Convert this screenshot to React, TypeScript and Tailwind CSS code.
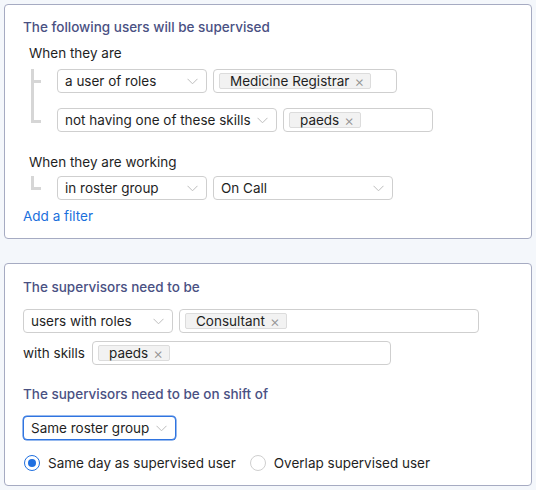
import React from "react";

const font = { fontFamily: "Inter, 'Noto Sans', sans-serif" };

function Chevron() {
  return (
    <svg width="11" height="7" viewBox="0 0 11 7" className="shrink-0">
      <path d="M0.5 0.8 L5.5 5.8 L10.5 0.8" fill="none" stroke="#bdbdbd" strokeWidth="1" />
    </svg>
  );
}

function Select({ label, width, focused }: { label: string; width: string; focused?: boolean }) {
  return (
    <div
      className={`${width} h-6 shrink-0 flex items-center justify-between pl-[7px] pr-[8px] rounded-[4px] bg-white border ${
        focused ? "border-[#2f74e0] shadow-[0_0_0_0.5px_#2f74e0]" : "border-[#cfcfcf]"
      }`}
    >
      <span className="text-[13.5px] text-[#1f1f1f] whitespace-nowrap">{label}</span>
      <Chevron />
    </div>
  );
}

function Tag({ label }: { label: string }) {
  return (
    <span className="h-4 flex items-center gap-[5px] pl-[10px] pr-[6px] bg-[#f2f2f2] border border-[#dcdcdc] rounded-[2px] text-[13.5px] text-[#1f1f1f] whitespace-nowrap">
      {label}
      <span className="text-[15px] font-light text-[#8f8f8f] leading-none">×</span>
    </span>
  );
}

function TagInput({ tag, width }: { tag: string; width: string }) {
  return (
    <div className={`${width} h-6 shrink-0 flex items-center px-[5px] rounded-[4px] bg-white border border-[#cfcfcf]`}>
      <Tag label={tag} />
    </div>
  );
}

function Radio({ checked, label }: { checked?: boolean; label: string }) {
  return (
    <div className="flex items-center gap-2">
      {checked ? (
        <span className="w-4 h-4 rounded-full border-[1.5px] border-[#1f6fe0] flex items-center justify-center">
          <span className="w-2 h-2 rounded-full bg-[#1f6fe0]" />
        </span>
      ) : (
        <span className="w-4 h-4 rounded-full border border-[#cfcfcf] bg-white" />
      )}
      <span className="text-[13.5px] text-[#1f1f1f] leading-5">{label}</span>
    </div>
  );
}

function Bracket({ height, ticks }: { height: number; ticks: number[] }) {
  return (
    <svg width="28" height={height} className="shrink-0">
      <rect x="2" y="0" width="3" height={ticks[ticks.length - 1] + 2} fill="#d6d6d6" />
      {ticks.map((t) => (
        <rect key={t} x="2" y={t - 1} width="10" height="3" fill="#d6d6d6" />
      ))}
    </svg>
  );
}

export default function App() {
  return (
    <div className="min-h-[490px] w-[536px] bg-[#f4f7fb] p-1 flex flex-col gap-6" style={font}>
      {/* supervised users */}
      <div className="bg-white border border-[#a6abc2] rounded-[4px] pt-3 pb-3 px-[18px]">
        <div className="text-[13.5px] leading-5 font-medium text-[#4a5183]">
          The following users will be supervised
        </div>
        <div className="pl-[6px]">
          <div className="mt-[6px] text-[13.5px] leading-5 text-[#1f1f1f]">When they are</div>
          <div className="mt-[6px] flex">
            <Bracket height={63} ticks={[12, 52]} />
            <div className="flex flex-col gap-[15px]">
              <div className="flex gap-[6px]">
                <Select label="a user of roles" width="w-[150px]" />
                <TagInput tag="Medicine Registrar" width="w-[184px]" />
              </div>
              <div className="flex gap-[6px]">
                <Select label="not having one of these skills" width="w-[220px]" />
                <TagInput tag="paeds" width="w-[150px]" />
              </div>
            </div>
          </div>
          <div className="mt-5 text-[13.5px] leading-5 text-[#1f1f1f]">When they are working</div>
          <div className="mt-1 flex">
            <Bracket height={24} ticks={[12]} />
            <div className="flex gap-[6px]">
              <Select label="in roster group" width="w-[150px]" />
              <Select label="On Call" width="w-[180px]" />
            </div>
          </div>
        </div>
        <div className="mt-[6px] text-[13.5px] leading-5 text-[#1a6fdc]">Add a filter</div>
      </div>

      {/* supervisors */}
      <div className="bg-white border border-[#a6abc2] rounded-[4px] pt-[13px] pb-3 px-[18px]">
        <div className="text-[13.5px] leading-5 font-medium text-[#4a5183]">The supervisors need to be</div>
        <div className="mt-3 flex gap-[6px]">
          <Select label="users with roles" width="w-[150px]" />
          <TagInput tag="Consultant" width="w-[300px]" />
        </div>
        <div className="mt-2 flex items-center gap-[7px]">
          <span className="text-[13.5px] text-[#1f1f1f]">with skills</span>
          <TagInput tag="paeds" width="w-[299px]" />
        </div>
        <div className="mt-[19px] text-[13.5px] leading-5 font-medium text-[#4a5183]">
          The supervisors need to be on shift of
        </div>
        <div className="mt-3 flex">
          <Select label="Same roster group" width="w-[153px]" focused />
        </div>
        <div className="mt-[13px] flex items-center gap-[14px] pl-px">
          <Radio checked label="Same day as supervised user" />
          <Radio label="Overlap supervised user" />
        </div>
      </div>
    </div>
  );
}
